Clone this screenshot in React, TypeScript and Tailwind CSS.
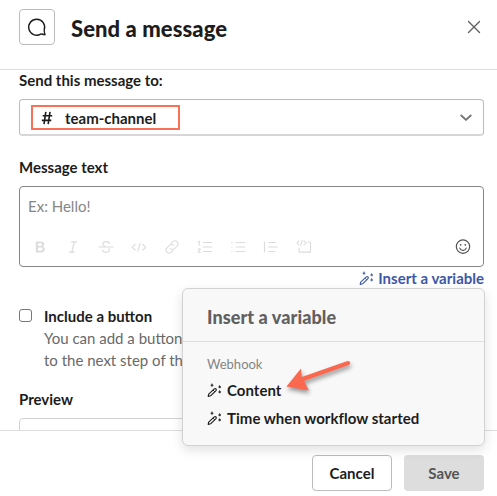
import type { ReactNode } from "react";

function Wand({ className = "" }: { className?: string }) {
  return (
    <svg viewBox="0 0 15 15" className={`h-[15px] w-[15px] shrink-0 ${className}`} fill="none" stroke="currentColor" strokeLinecap="round" strokeLinejoin="round">
      <path d="M1.7 11.1 7.3 5.9q1-.7 1.7.1t0 1.7L3.6 12.8l-2.4.6z" strokeWidth="1.15" />
      <path d="m6.2 7.2 1.4 1.4" strokeWidth=".9" />
      <path d="m5 1 .4.9.9.4-.9.4-.4.9-.4-.9-.9-.4.9-.4zM12.7 2.8l.4.8.8.4-.8.4-.4.8-.4-.8-.8-.4.8-.4zM12.7 7.8l.4.8.8.4-.8.4-.4.8-.4-.8-.8-.4.8-.4z" fill="currentColor" strokeWidth=".6" />
    </svg>
  );
}

function Tool({ children }: { children: ReactNode }) {
  return (
    <svg viewBox="0 0 16 16" className="h-4 w-4 shrink-0" fill="none" stroke="currentColor" strokeWidth="1.1" strokeLinecap="round" strokeLinejoin="round">
      {children}
    </svg>
  );
}

function Toolbar() {
  return (
    <div className="flex items-center gap-[17px] text-[#dcdcdc]">
      <Tool><path fillRule="evenodd" d="M3.8 2.5h5c2.2 0 3.5 1 3.5 2.8 0 1.1-.6 2-1.7 2.4 1.4.3 2.2 1.2 2.2 2.6 0 2-1.5 3.2-3.9 3.2H3.8zM6 4.3v2.6h2.4c1.1 0 1.6-.5 1.6-1.3S9.500 4.300 8.400 4.300zM6 8.600v3.100h2.700c1.200 0 1.900-.6 1.900-1.600s-.7-1.500-1.900-1.500z" fill="currentColor" stroke="none" /></Tool>
      <Tool><path d="M6.500 2.800h5M4.500 13.200h4.700M9.300 2.800 6.800 13.200" strokeWidth="1.3" /></Tool>
      <Tool><path d="M1 8h14M11.500 4.500C10.700 1.700 4.600 2 4.800 5c.1 1.200.8 1.800 1.700 2.200M11.200 9.600c1 2.600-1.200 3.700-3.200 3.700-2 0-3.200-.9-3.700-2.300" strokeWidth="1.2" /></Tool>
      <Tool><path d="m4.300 5.500-3.200 2.800L4.300 11M11.700 5.500l3.200 2.800-3.200 2.700M9.200 4.300 6.800 12.200" /></Tool>
      <Tool><path d="m7.100 4.400 1.600-1.600c3-2.700 7.100 1.300 4.400 4.300l-2.500 2.500c-1.400 1.300-3.200 1.100-4.300-.1M8.900 11.600l-1.600 1.600c-3 2.700-7.100-1.300-4.400-4.300l2.500-2.500c1.400-1.300 3.200-1.100 4.300.1" /></Tool>
      <Tool><path d="M6.200 3.500h8.600M6.200 8h8.600M6.200 12.500h8.600M1.200 3.100 2.300 2.300v4M1.100 10.200q2.200-.9 2.100.5L1.100 13.300h2.300" /></Tool>
      <Tool><path d="M6.200 3.500h8.600M6.200 8h8.600M6.200 12.500h8.600M1.700 3.500h.3M1.700 8h.3M1.700 12.500h.3" strokeWidth="1.2" /></Tool>
      <Tool><path d="M1.500 3.200v9.600M5.500 3.500h6.900M5.500 8h8.700M5.500 12.500h6.200" strokeWidth="1.2" /></Tool>
      <Tool><path d="M3 1.900.9 3.900 3 5.800M8 1.900l2.200 2L8 5.800M6.200 1.500 4.800 6.400M12 3.300h2.500v9.800H3.100V9" /></Tool>
    </div>
  );
}

export default function App() {
  return (
    <main className="relative flex h-[496px] w-[497px] flex-col overflow-hidden bg-white font-['Lato','Liberation_Sans',sans-serif] text-[15px] leading-[22px] text-[#1d1c1d]">
      <header className="flex h-[70px] shrink-0 items-start border-b border-[#dedede] pr-4 pl-[19px]">
        <div className="mt-[9px] flex h-9 w-9 items-center justify-center rounded border border-[#bbbbbb]">
          <svg viewBox="0 0 20 20" className="h-5 w-5" fill="none" stroke="currentColor" strokeWidth="1.4" strokeLinejoin="round">
            <path d="M18 17.700c-2.400-.3-3.300-1-4.300-.6A8 8 0 1 1 17.300 12.600c-.5 1.300-.3 2.200.7 5.100z" />
          </svg>
        </div>
        <h1 className="mt-[14px] ml-4 flex-1 text-[22px] leading-[30px] font-black tracking-[0.08px]">Send a message</h1>
        <svg viewBox="0 0 14 14" className="mt-5 h-[14px] w-[14px] text-[#616061]" fill="none" stroke="currentColor" strokeWidth="1.35" strokeLinecap="round">
          <path d="m1.500 1.500 11 11m0-11-11 11" />
        </svg>
      </header>

      <section className="flex h-[360px] shrink-0 flex-col overflow-hidden pr-[13px] pl-[19px]">
        <p className="-mt-px font-bold">Send this message to:</p>
        <div className="mt-2 flex h-[37px] shrink-0 items-center justify-between rounded border border-b-2 border-[#bbbbbb] border-b-[#d6d6d6] px-[11px]">
          <div className="mt-px flex h-[25px] w-[149px] items-center border-2 border-[#fb7059] pl-2 font-bold">
            <svg viewBox="0 0 12 14" className="h-[14px] w-3" fill="none" stroke="currentColor" strokeWidth="1.6">
              <path d="M1.700 4.700h9.500M.8 9.400h9.500M4.800.8 3 13.200M9 .8 7.200 13.200" />
            </svg>
            <span className="ml-3">team-channel</span>
          </div>
          <svg viewBox="0 0 12 8" className="mt-px h-2 w-3 text-[#777777]" fill="none" stroke="currentColor" strokeWidth="1.9" strokeLinecap="round" strokeLinejoin="round">
            <path d="m1.300 1.500 4.700 4.400 4.700-4.400" />
          </svg>
        </div>
        <p className="mt-5 font-bold">Message text</p>
        <div className="mt-2 flex h-[81px] shrink-0 flex-col justify-between rounded border border-[#868686] pt-2 pr-3 pb-[11px] pl-2">
          <p className="text-[#868686]">Ex: Hello!</p>
          <div className="flex items-center justify-between pl-1">
            <Toolbar />
            <svg viewBox="0 0 16 16" className="h-4 w-4 text-[#505050]" fill="none" stroke="currentColor" strokeWidth="1.2" strokeLinecap="round">
              <circle cx="8" cy="7.600" r="6.700" />
              <path d="M4.800 9.100a3.400 3.400 0 0 0 6.400 0" />
              <circle cx="5.700" cy="5.800" r=".85" fill="currentColor" stroke="none" />
              <circle cx="10.300" cy="5.800" r=".85" fill="currentColor" stroke="none" />
            </svg>
          </div>
        </div>
        <div className="flex items-center justify-end gap-1 font-bold text-[#3d57a8]">
          <Wand /><span>Insert a variable</span>
        </div>
        <div className="mt-4 flex">
          <span className="mt-1 h-[13px] w-[13px] shrink-0 rounded-[3px] border border-[#777777]" />
          <div className="ml-3">
            <p className="font-bold">Include a button</p>
            <p className="text-[#696969]">You can add a button<br />to the next step of the</p>
          </div>
        </div>
        <p className="mt-[17px] font-bold">Preview</p>
        <div className="mt-2 h-10 shrink-0 rounded-t border border-[#d2d2d2]" />
      </section>

      <footer className="flex flex-1 items-start justify-end gap-3 border-t border-[#dddddd] pt-6 pr-[13px] font-bold">
        <button className="h-9 w-20 rounded border border-[#bcbcbc] bg-white">Cancel</button>
        <button className="h-9 w-20 rounded bg-[#dddddd] text-[#555555]">Save</button>
      </footer>

      <aside className="absolute top-[288px] left-[182px] h-[158px] w-[303px] rounded-md border border-[#d2d2d2] bg-[#f8f8f8] shadow-[0_4px_12px_rgba(0,0,0,0.12)]">
        <h2 className="h-[53px] border-b border-[#dddddd] pt-[17px] pl-6 text-[18px] font-black tracking-[0.08px] text-[#616061]">Insert a variable</h2>
        <p className="mt-[11px] pl-6 text-[13px] text-[#858585]">Webhook</p>
        <div className="mt-1 flex items-center gap-[5px] pl-6 font-bold"><Wand /><span className="tracking-[0.03px]">Content</span></div>
        <div className="mt-1.5 flex items-center gap-[5px] pl-6 font-bold"><Wand /><span className="tracking-[0.03px]">Time when workflow started</span></div>
        <svg viewBox="0 0 70 36" className="absolute top-[70px] left-[102px] h-9 w-[70px] drop-shadow-[1px_3px_2px_rgba(0,0,0,0.4)]">
          <path d="M1.500 27.500 16 9.500l.8 8.600L62.500 2q2.300-.2 2.700 1.600c.1 1.700-.8 2.300-2 2.700L19 22.100l4.800 9.500z" fill="#fb6850" />
        </svg>
      </aside>
    </main>
  );
}
